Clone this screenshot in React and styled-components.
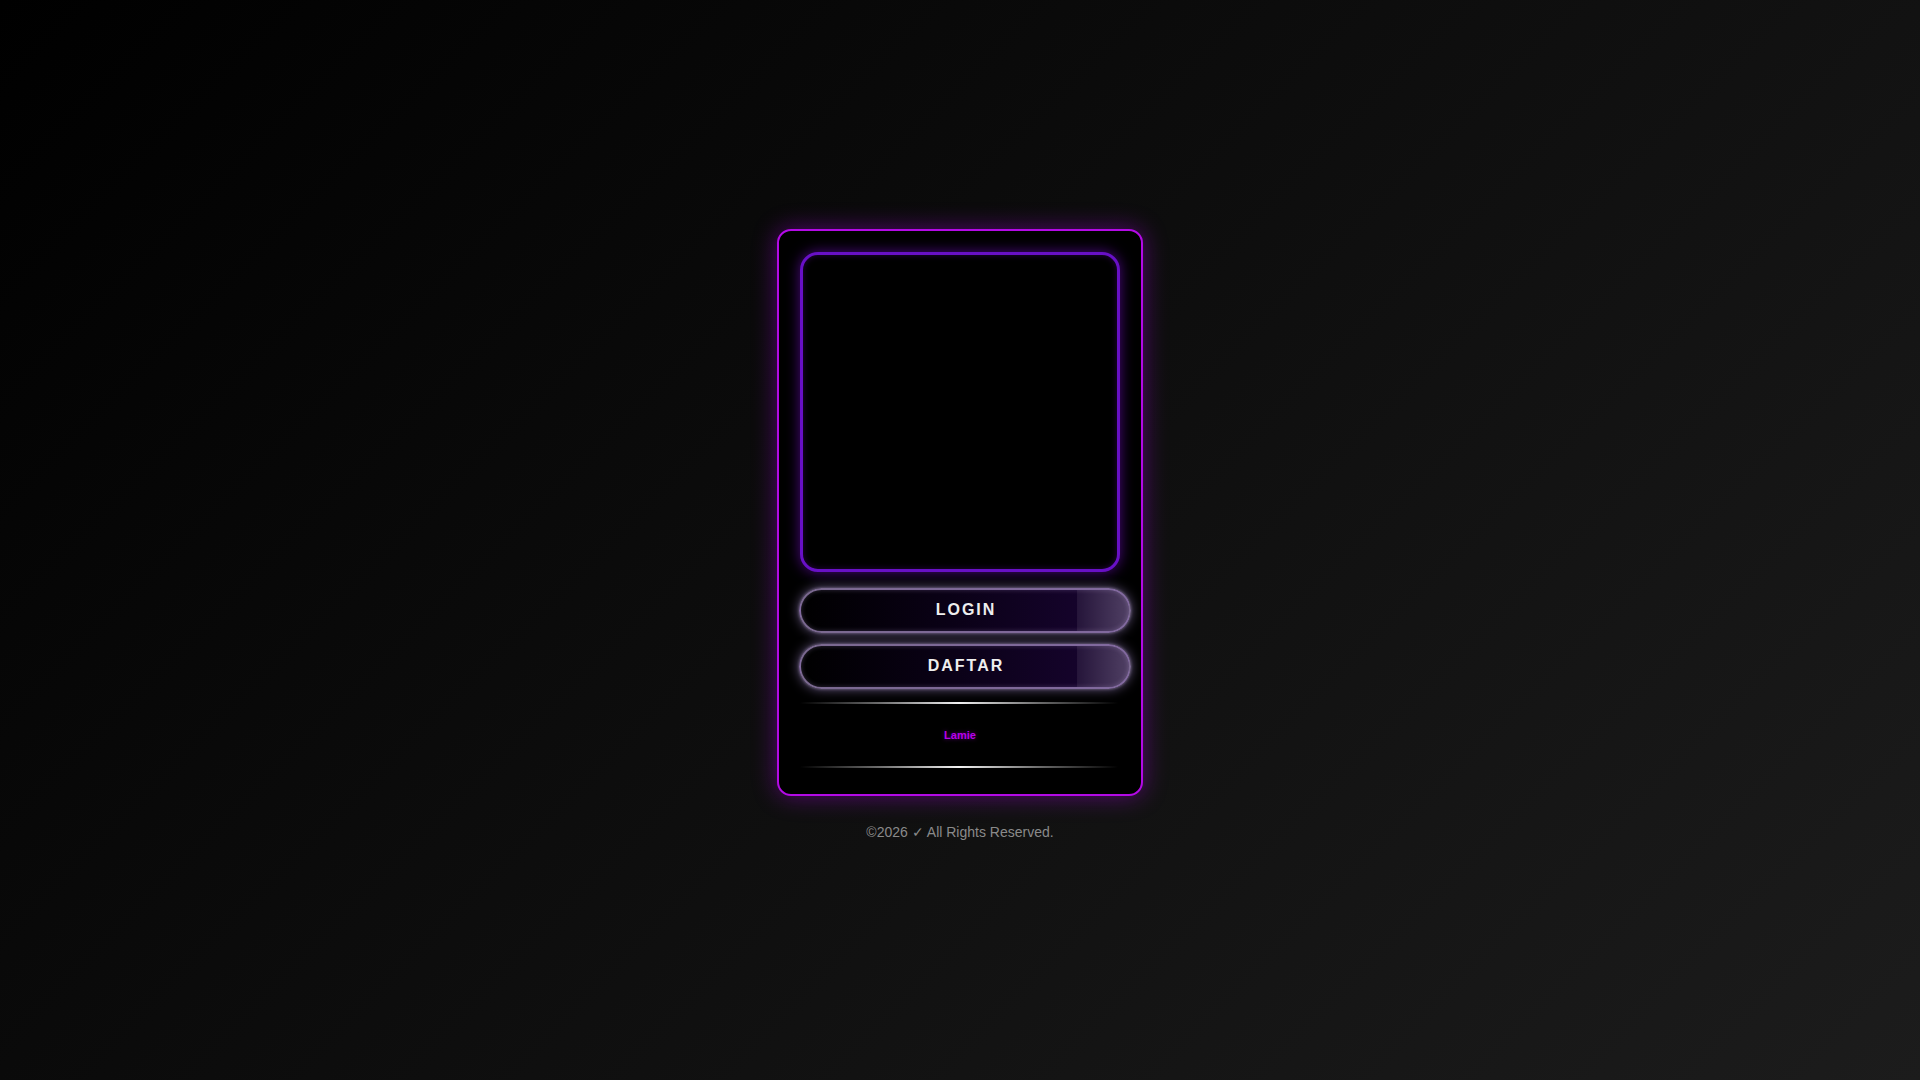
import React from 'react'
import styled, { createGlobalStyle } from 'styled-components'

const GlobalStyle = createGlobalStyle`
  html, body {
    margin: 0;
    padding: 0;
  }
  body {
    min-height: 100vh;
    background: linear-gradient(135deg, #000000 0%, #0e0e0e 50%, #1c1c1c 100%);
    font-family: 'Liberation Sans', Arial, sans-serif;
  }
`;

const Page = styled.main`
  min-height: 100vh;
  display: flex;
  flex-direction: column;
  align-items: center;
  justify-content: center;
  padding-bottom: 12px;
  box-sizing: border-box;
`;

const Card = styled.section`
  width: 366px;
  box-sizing: border-box;
  padding: 21px 21px 26px;
  background: #000;
  border: 2px solid #b30ae6;
  border-radius: 14px;
  box-shadow: 0 0 24px rgba(170, 0, 230, 0.45);
  display: flex;
  flex-direction: column;
`;

const Banner = styled.div`
  width: 320px;
  height: 320px;
  box-sizing: border-box;
  border: 3px solid #6810c6;
  border-radius: 18px;
  background: #000;
  box-shadow: 0 0 14px rgba(125, 15, 215, 0.6), inset 0 0 6px rgba(125, 15, 215, 0.3);
`;

const Actions = styled.div`
  display: flex;
  flex-direction: column;
  gap: 11px;
  margin-top: 16px;
  margin-left: -1px;
`;

const PillButton = styled.button`
  position: relative;
  width: 332px;
  height: 45px;
  box-sizing: border-box;
  border: 2px solid rgba(175, 150, 205, 0.7);
  border-radius: 23px;
  background: linear-gradient(90deg, #000000 0%, #0a0116 45%, #190433 100%);
  box-shadow: 0 0 12px rgba(205, 175, 255, 0.5), 0 0 3px rgba(225, 205, 255, 0.45), inset 0 0 5px rgba(200, 170, 240, 0.25);
  color: #eeeeee;
  font-family: 'Liberation Sans', Arial, sans-serif;
  font-size: 16px;
  font-weight: 700;
  letter-spacing: 2px;
  padding: 0 0 0 2px;
  cursor: pointer;
  overflow: hidden;

  &::after {
    content: '';
    position: absolute;
    top: 0;
    right: 0;
    bottom: 0;
    width: 52px;
    background: linear-gradient(90deg, rgba(255, 255, 255, 0.07) 0%, rgba(255, 255, 255, 0.24) 100%);
  }
`;

const Divider = styled.div`
  width: 318px;
  height: 2px;
  margin-top: ${props => props.$top || 0}px;
  background: linear-gradient(90deg, rgba(255,255,255,0) 0%, rgba(200,200,200,0.55) 25%, #f2f2f2 50%, rgba(200,200,200,0.55) 75%, rgba(255,255,255,0) 100%);
`;

const Brand = styled.div`
  height: 62px;
  display: flex;
  align-items: center;
  justify-content: center;
  color: #b800ea;
  font-size: 11px;
  font-weight: 700;
  text-shadow: 0 0 4px rgba(184, 0, 234, 0.5);
`;

const Footer = styled.footer`
  margin-top: 28px;
  color: #8a8a8a;
  font-size: 14px;
  line-height: 16px;
`;

const App = () => {
    return (
        <>
            <GlobalStyle />
            <Page>
                <Card>
                    <Banner />
                    <Actions>
                        <PillButton>LOGIN</PillButton>
                        <PillButton>DAFTAR</PillButton>
                    </Actions>
                    <Divider $top={13} />
                    <Brand>Lamie</Brand>
                    <Divider />
                </Card>
                <Footer>©2026 ✓ All Rights Reserved.</Footer>
            </Page>
        </>
    )
}

export default App
